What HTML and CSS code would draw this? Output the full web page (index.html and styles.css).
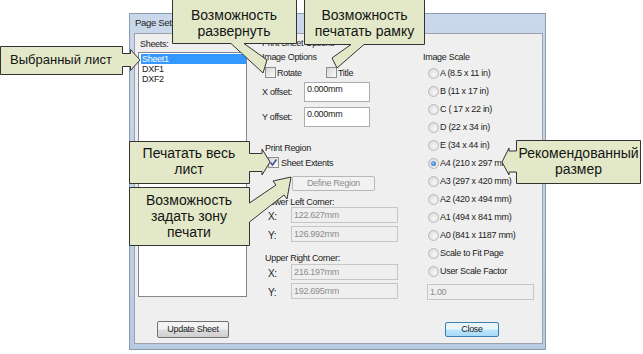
FILE: index.html
```html
<!DOCTYPE html>
<html>
<head>
  <meta charset="UTF-8" />
  <title>Page Setup</title>
  <link rel="stylesheet" href="styles.css">
</head>
<body>
  <div class="window">
    <div class="titlebar">Page Setup</div>
    <div class="client">

      <div class="col-sheets">
        <div class="lbl pad2">Sheets:</div>
        <div class="listbox">
          <div class="item selected">Sheet1</div>
          <div class="item">DXF1</div>
          <div class="item">DXF2</div>
        </div>
        <div class="btn btn-update">Update Sheet</div>
      </div>

      <div class="col-options">
        <div class="lbl">Print Sheet Options</div>
        <div class="lbl gap2">Image Options</div>
        <div class="checkrow">
          <span class="checkitem first"><span class="cb"></span>Rotate</span>
          <span class="checkitem"><span class="cb"></span>Title</span>
        </div>
        <div class="offsetrow">
          <span class="offlbl">X offset:</span>
          <span class="field">0.000mm</span>
        </div>
        <div class="offsetrow second">
          <span class="offlbl">Y offset:</span>
          <span class="field">0.000mm</span>
        </div>

        <div class="lbl pad3 region">Print Region</div>
        <div class="checkrow extents">
          <span class="checkitem"><span class="cb checked">
            <svg width="9" height="9" viewBox="0 0 9 9"><polyline points="1.5,4.5 3.5,7 7.5,1.5" fill="none" stroke="#3d4fa3" stroke-width="1.6"/></svg>
          </span>Sheet Extents</span>
        </div>
        <div class="btn btn-define">Define Region</div>

        <div class="sublbl">Lower Left Corner:</div>
        <div class="coordrow">
          <span class="coordlbl">X:</span>
          <span class="field off">122.627mm</span>
        </div>
        <div class="coordrow next">
          <span class="coordlbl">Y:</span>
          <span class="field off">126.992mm</span>
        </div>

        <div class="sublbl upper">Upper Right Corner:</div>
        <div class="coordrow first">
          <span class="coordlbl">X:</span>
          <span class="field off">216.197mm</span>
        </div>
        <div class="coordrow next">
          <span class="coordlbl">Y:</span>
          <span class="field off">192.695mm</span>
        </div>
      </div>

      <div class="col-scale">
        <div class="lbl">Image Scale</div>
        <div class="radios">
          <div class="radio"><span class="rd"></span>A (8.5 x 11 in)</div>
          <div class="radio"><span class="rd"></span>B (11 x 17 in)</div>
          <div class="radio"><span class="rd"></span>C ( 17 x 22 in)</div>
          <div class="radio"><span class="rd"></span>D (22 x 34 in)</div>
          <div class="radio"><span class="rd"></span>E (34 x 44 in)</div>
          <div class="radio"><span class="rd on"></span>A4 (210 x 297 mm)</div>
          <div class="radio"><span class="rd"></span>A3 (297 x 420 mm)</div>
          <div class="radio"><span class="rd"></span>A2 (420 x 494 mm)</div>
          <div class="radio"><span class="rd"></span>A1 (494 x 841 mm)</div>
          <div class="radio"><span class="rd"></span>A0 (841 x 1187 mm)</div>
          <div class="radio"><span class="rd"></span>Scale to Fit Page</div>
          <div class="radio"><span class="rd"></span>User Scale Factor</div>
        </div>
        <span class="field off factor">1.00</span>
        <div class="btn btn-close">Close</div>
      </div>

    </div>
  </div>

  <!-- callout shapes drawn over the dialog -->
  <svg class="callouts" width="643" height="354" viewBox="0 0 643 354">
    <g fill="#e3e9c8" stroke="#333" stroke-width="1">
      <path d="M0.5,46.5 H122.5 V53.5 H130.5 V49.5 L140,60 L130.5,70.5 V66.5 H122.5 V74.5 H0.5 Z"/>
      <path d="M172.5,-1 H296.5 V43.5 H244 L267,60 L263,73 L231,43.5 H172.5 Z"/>
      <path d="M304.5,-1 H424.5 V44.5 H364 L337,68 L332,58 L351,44.5 H304.5 Z"/>
      <path d="M129.5,141.5 H249.5 V153.5 H262 V149 L270,162 L262,175 V171.5 H249.5 V183.5 H129.5 Z"/>
      <path d="M129.5,187.5 H249.5 V203 L276,185 L273,181 L291,177 L287,199 L284,195 L249.5,222 V245.5 H129.5 Z"/>
      <path d="M516.5,140.5 H640.5 V183.5 H516.5 V172 H509 V175 L502,162 L509,148 V151 H516.5 Z"/>
    </g>
  </svg>

  <div class="note n-sheet">Выбранный лист</div>
  <div class="note n-rotate">Возможность<br>развернуть</div>
  <div class="note n-frame">Возможность<br>печатать рамку</div>
  <div class="note n-whole">Печатать весь<br>лист</div>
  <div class="note n-region">Возможность<br>задать зону<br>печати</div>
  <div class="note n-size">Рекомендованный<br>размер</div>
</body>
</html>
```

FILE: styles.css
```css
* {
  box-sizing: border-box;
}

body {
  margin: 0;
  width: 643px;
  height: 354px;
  overflow: hidden;
  position: relative;
  background-color: #fff;
  font-family: "Liberation Sans", Arial, sans-serif;
}

/* Dialog window */
.window {
  margin: 13px 0 0 129px;
  width: 417px;
  height: 337px;
  border: 1px solid #8a9bb0;
  background: linear-gradient(#c9d8ea, #b7cbe2);
  padding: 0 2px 5px 4px;
}

.titlebar {
  height: 19px;
  line-height: 18px;
  padding-left: 1px;
  font-size: 9.5px;
  letter-spacing: -0.3px;
  color: #1e1e1e;
}

.client {
  display: flex;
  width: 409px;
  height: 311px;
  border: 1px solid #9aa3ad;
  background-color: #efefef;
  font-size: 9px;
  letter-spacing: -0.3px;
  color: #222;
}

.lbl {
  height: 12px;
  line-height: 12px;
  white-space: nowrap;
}

.pad2 {
  padding-left: 2px;
}

.pad3 {
  padding-left: 3px;
}

.gap2 {
  margin-top: 2px;
}

/* Sheets column */
.col-sheets {
  margin: 4px 0 0 3px;
  width: 109px;
}

.listbox {
  margin-top: 2px;
  height: 245px;
  border: 1px solid #828790;
  background-color: #fff;
  padding: 1px 0 0 2px;
}

.item {
  height: 10px;
  line-height: 10px;
  padding-left: 1px;
}

.item.selected {
  background-color: #3399ff;
  color: #fff;
}

/* Buttons */
.btn {
  text-align: center;
  border: 1px solid #707070;
  border-radius: 2px;
  background: linear-gradient(#f3f3f3 45%, #dcdcdc 55%, #d0d0d0);
  white-space: nowrap;
}

.btn-update {
  margin: 24px 0 0 19px;
  width: 72px;
  height: 17px;
  line-height: 15px;
}

.btn-define {
  margin: 7px 0 0 30px;
  width: 83px;
  height: 15px;
  line-height: 13px;
  color: #8d8d8d;
  border-color: #b4b8bb;
  background: #f2f2f2;
}

.btn-close {
  margin: 22px 0 0 22px;
  width: 54px;
  height: 15px;
  line-height: 13px;
  border-color: #3c7fb1;
  background: linear-gradient(#eaf6fd 45%, #bee6fd 55%, #a7d9f5);
}

/* Options column */
.col-options {
  margin: 3px 0 0 15px;
  width: 138px;
}

.checkrow {
  display: flex;
  align-items: center;
  margin: 3px 0 0 3px;
  height: 13px;
}

.checkrow.extents {
  margin: 2px 0 0 6px;
}

.checkitem {
  display: flex;
  align-items: center;
  white-space: nowrap;
}

.checkitem.first {
  width: 61px;
}

.cb {
  width: 11px;
  height: 11px;
  margin-right: 1px;
  border: 1px solid #8e8f8f;
  background: linear-gradient(135deg, #d6d6d6, #fbfbfb);
  display: flex;
  align-items: center;
  justify-content: center;
}

.cb.checked {
  margin-right: 2px;
}

.offsetrow {
  display: flex;
  align-items: center;
  margin-top: 3px;
  height: 20px;
}

.offsetrow.second {
  margin-top: 5px;
}

.offlbl {
  width: 42px;
  white-space: nowrap;
}

.field {
  display: block;
  height: 100%;
  width: 66px;
  border: 1px solid #abadb3;
  background-color: #fff;
  padding-left: 2px;
  line-height: 13px;
  white-space: nowrap;
}

.field.off {
  width: 107px;
  border-color: #c6c6c6;
  background-color: transparent;
  color: #8c8c8c;
  line-height: 14px;
}

.region {
  margin-top: 15px;
}

.sublbl {
  margin-top: 7px;
  padding-left: 3px;
  height: 9px;
  line-height: 9px;
  white-space: nowrap;
}

.sublbl.upper {
  margin-top: 12px;
}

.coordrow {
  display: flex;
  align-items: flex-end;
  height: 16px;
}

.coordrow.first {
  margin-top: 1px;
}

.coordrow.next {
  margin-top: 3px;
}

.coordlbl {
  width: 29px;
  padding-left: 6px;
  font-size: 10px;
  line-height: 12px;
}

/* Image scale column */
.col-scale {
  margin: 17px 0 0 23px;
  width: 100px;
}

.radios {
  margin-top: 1px;
}

.radio {
  display: flex;
  align-items: center;
  height: 18px;
  padding-left: 5px;
  white-space: nowrap;
}

.rd {
  width: 11px;
  height: 11px;
  margin-right: 1px;
  border-radius: 50%;
  border: 1px solid #b9b9b9;
  background: radial-gradient(circle at 60% 60%, #f8f8f8, #d4d4d4);
  display: flex;
  align-items: center;
  justify-content: center;
}

.rd.on::after {
  content: "";
  width: 5px;
  height: 5px;
  border-radius: 50%;
  background: radial-gradient(circle at 40% 40%, #8cc3f3, #1d5fb5);
}

.factor {
  margin: 4px 0 0 4px;
  width: 79px;
  height: 16px;
}

/* Callouts over the screenshot */
.callouts {
  position: absolute;
  left: 0;
  top: 0;
}

.note {
  position: absolute;
  font-size: 14px;
  line-height: 16px;
  text-align: center;
  color: #141414;
  white-space: nowrap;
}

.n-sheet {
  left: 0;
  top: 52px;
  width: 122px;
  font-size: 13px;
}

.n-rotate {
  left: 172px;
  top: 7px;
  width: 124px;
}

.n-frame {
  left: 304px;
  top: 7px;
  width: 121px;
}

.n-whole {
  left: 129px;
  top: 145px;
  width: 120px;
}

.n-region {
  left: 129px;
  top: 192px;
  width: 120px;
}

.n-size {
  left: 516px;
  top: 145px;
  width: 125px;
}
```
